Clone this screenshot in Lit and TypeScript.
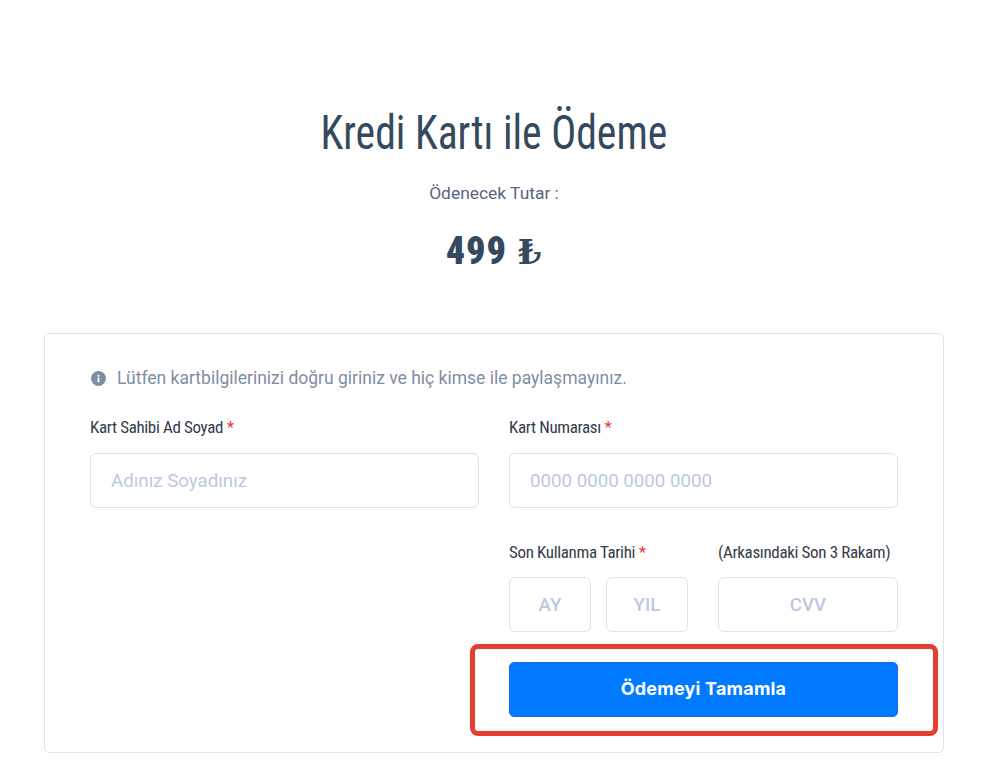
import { LitElement, html, css } from "lit";
import { customElement } from "lit/decorators.js";

@customElement("app-root")
export class AppRoot extends LitElement {
  static styles = css`
    :host { display: block; background: #fff; font-family: Roboto, "Liberation Sans", sans-serif; height: 782px; overflow: hidden; }
    .page { padding: 104px 49px 0 44px; display: flex; flex-direction: column; }
    .head { display: flex; flex-direction: column; align-items: center; height: 229px; }
    h1 { margin: 0; font-family: Roboto, sans-serif; font-stretch: 75%; font-weight: 430; font-size: 49px; line-height: 58px; color: #34495e; white-space: nowrap; transform: scaleX(0.85); }
    .due { margin-top: 21px; font-size: 17.4px; line-height: 20px; color: #59657f; }
    .amount { margin-top: 26px; font-family: Roboto, sans-serif; font-stretch: 75%; font-weight: 900; font-size: 38px; line-height: 44px; letter-spacing: 1px; color: #34495e; white-space: nowrap; }
    .lira { font-family: "DejaVu Serif", serif; font-stretch: 100%; font-weight: 700; font-size: 34px; margin-left: 1px; }
    .card { position: relative; box-sizing: border-box; height: 420px; border: 1px solid #dfe1ec; border-radius: 5px; padding: 32px 45px 0; }
    .note { display: flex; align-items: center; gap: 11px; height: 24px; font-size: 17.5px; color: #7e8ea5; }
    .note svg { width: 15px; height: 15px; margin-left: 1px; flex: none; }
    .grid { display: grid; grid-template-columns: 389px 389px; column-gap: 30px; margin-top: 26px; }
    .field { display: flex; flex-direction: column; }
    label { display: block; height: 37px; line-height: 22px; font-family: Roboto, sans-serif; font-stretch: 75%; font-size: 17px; letter-spacing: -0.35px; color: #343c4a; white-space: nowrap; }
    label b { font-weight: 400; color: #e53c3c; }
    input { box-sizing: border-box; width: 100%; height: 55px; border: 1px solid #dfe1ec; border-radius: 6px; padding: 0 20px; font-family: Roboto, sans-serif; font-size: 18.7px; background: #fff; outline: none; }
    input::placeholder { color: #bcc8e2; opacity: 1; }
    input.center { text-align: center; padding: 0; font-weight: 500; }
    .lower { grid-column: 2; display: grid; grid-template-columns: 82px 82px 180px; column-gap: 15px; margin-top: 33px; }
    .lower label { height: 36px; }
    .lower .date { grid-column: 1 / span 2; }
    .lower .cvvl { margin-left: 15px; }
    .lower .cvv { margin-left: 15px; width: 180px; }
    button { grid-column: 2; margin-top: 30px; height: 55px; padding: 0 0 2px; border: 1px solid #2a62f0; border-radius: 5px; background: #007bff; color: #fff; font-family: Inter, Roboto, sans-serif; font-weight: 700; font-size: 18px; letter-spacing: 0.2px; }
    .mark { position: absolute; left: 425px; top: 310px; width: 468px; height: 92px; box-sizing: border-box; border: 5px solid #e53e30; border-radius: 8px; pointer-events: none; }
  `;

  render() {
    return html`
      <div class="page">
        <div class="head">
          <h1>Kredi Kartı ile Ödeme</h1>
          <div class="due">Ödenecek Tutar :</div>
          <div class="amount">499 <span class="lira">₺</span></div>
        </div>
        <div class="card">
          <div class="note">
            <svg viewBox="0 0 16 16"><circle cx="8" cy="8" r="8" fill="#7e8ea5"/><rect x="7" y="7" width="2" height="5" fill="#fff"/><rect x="7" y="4" width="2" height="2" fill="#fff"/></svg>
            Lütfen kartbilgilerinizi doğru giriniz ve hiç kimse ile paylaşmayınız.
          </div>
          <div class="grid">
            <div class="field">
              <label>Kart Sahibi Ad Soyad <b>*</b></label>
              <input placeholder="Adınız Soyadınız" />
            </div>
            <div class="field">
              <label>Kart Numarası <b>*</b></label>
              <input placeholder="0000 0000 0000 0000" />
            </div>
            <div class="lower">
              <label class="date">Son Kullanma Tarihi <b>*</b></label>
              <label class="cvvl">(Arkasındaki Son 3 Rakam)</label>
              <input class="center" placeholder="AY" />
              <input class="center" placeholder="YIL" />
              <input class="center cvv" placeholder="CVV" />
            </div>
            <button>Ödemeyi Tamamla</button>
          </div>
          <div class="mark"></div>
        </div>
      </div>
    `;
  }
}
